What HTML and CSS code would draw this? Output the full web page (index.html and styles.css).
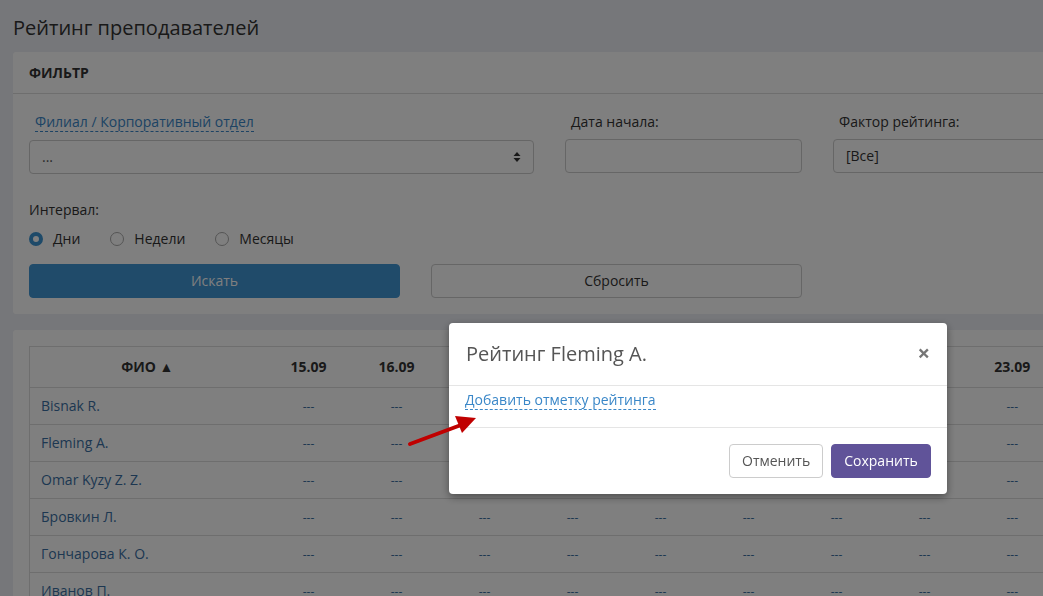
FILE: index.html
```html
<!DOCTYPE html>
<html lang="ru">

<head>
    <meta charset="UTF-8">
    <meta name="viewport" content="width=device-width, initial-scale=1.0">
    <title>Рейтинг преподавателей</title>
    <link rel="stylesheet" href="styles.css">
</head>

<body>
    <div class="page">
        <h1 class="page-title">Рейтинг преподавателей</h1>

        <div class="panel filter">
            <div class="panel-head">Фильтр</div>
            <div class="panel-body">
                <div class="filter-row">
                    <div class="field wide">
                        <label class="label link-label">Филиал / Корпоративный отдел</label>
                        <div class="control select">
                            <span>...</span>
                            <svg class="updown" width="8" height="12" viewBox="0 0 8 12">
                                <path d="M4 1 L7.5 5 H0.5 Z M4 11 L7.5 7 H0.5 Z" fill="#333" />
                            </svg>
                        </div>
                    </div>
                    <div class="field">
                        <label class="label">Дата начала:</label>
                        <div class="control"></div>
                    </div>
                    <div class="field">
                        <label class="label">Фактор рейтинга:</label>
                        <div class="control">[Все]</div>
                    </div>
                </div>

                <div class="interval">
                    <div class="interval-title">Интервал:</div>
                    <div class="radios">
                        <span class="radio checked">Дни</span>
                        <span class="radio">Недели</span>
                        <span class="radio">Месяцы</span>
                    </div>
                </div>

                <div class="actions">
                    <div class="btn btn-primary">Искать</div>
                    <div class="btn btn-default">Сбросить</div>
                </div>
            </div>
        </div>

        <div class="panel results">
            <table class="table">
                <thead>
                    <tr>
                        <th class="name-col">ФИО ▲</th>
                        <th>15.09</th>
                        <th>16.09</th>
                        <th>17.09</th>
                        <th>18.09</th>
                        <th>19.09</th>
                        <th>20.09</th>
                        <th>21.09</th>
                        <th>22.09</th>
                        <th>23.09</th>
                    </tr>
                </thead>
                <tbody class="list"></tbody>
            </table>
        </div>
    </div>

    <div class="overlay"></div>

    <div class="modal">
        <div class="modal-head">
            <div class="modal-title">Рейтинг Fleming A.</div>
            <span class="close">&times;</span>
        </div>
        <div class="modal-body">
            <span class="dash-link">Добавить отметку рейтинга</span>
        </div>
        <div class="modal-foot">
            <div class="btn btn-light">Отменить</div>
            <div class="btn btn-purple">Сохранить</div>
        </div>
    </div>

    <!-- стрелка-подсказка поверх окна -->
    <svg class="pointer" width="90" height="50" viewBox="0 0 90 50">
        <path d="M5 44 L56 25" stroke="#c00000" stroke-width="4" stroke-linecap="round" />
        <path d="M71 18 L50 16 L57 33 Z" fill="#c00000" />
    </svg>

    <script>
        const list = document.querySelector('.list')
        const names = ['Bisnak R.', 'Fleming A.', 'Omar Kyzy Z. Z.', 'Бровкин Л.', 'Гончарова К. О.', 'Иванов П.']

        names.forEach(name => {
            const tr = document.createElement('tr')
            let cells = `<td class="name-col"><span class="name">${name}</span></td>`
            for (let i = 0; i < 9; i++) {
                cells += '<td><span class="dash">---</span></td>'
            }
            tr.innerHTML = cells
            list.appendChild(tr)
        })
    </script>
</body>

</html>
```

FILE: styles.css
```css
*,
*::before {
    margin: 0;
    padding: 0;
    box-sizing: border-box;
}

body {
    background-color: #eceef4;
    font-family: "Open Sans", "Noto Sans", sans-serif;
    font-size: 14px;
    line-height: 20px;
    color: #333;
    overflow: hidden;
    height: 596px;
}

.page {
    width: 1073px;
    margin-left: 13px;
}

.page-title {
    font-size: 20px;
    font-weight: 400;
    line-height: 28px;
    padding-top: 14px;
    margin-bottom: 10px;
}

.panel {
    background-color: #fff;
    border-radius: 3px;
}

.panel-head {
    height: 42px;
    line-height: 42px;
    padding: 0 16px;
    font-size: 14px;
    font-weight: 700;
    text-transform: uppercase;
    border-bottom: 1px solid #ddd;
}

.panel-body {
    padding: 18px 16px 16px;
}

.filter-row {
    display: flex;
    gap: 31px;
}

.field {
    width: 237px;
}

.field.wide {
    width: 505px;
}

.label {
    display: inline-block;
    padding-left: 6px;
    margin-bottom: 7px;
}

.link-label {
    color: #3a87c8;
    line-height: 19px;
    margin-bottom: 8px;
    border-bottom: 1px dashed #3a87c8;
    margin-left: 6px;
    padding-left: 0;
}

.control {
    height: 34px;
    border: 1px solid #ccc;
    border-radius: 4px;
    padding: 6px 12px;
    display: flex;
    align-items: center;
}

.select {
    justify-content: space-between;
    padding-right: 12px;
    color: #555;
}

.interval {
    margin-top: 26px;
}

.radios {
    display: flex;
    gap: 30px;
    margin-top: 9px;
}

.radio {
    display: flex;
    align-items: center;
    gap: 10px;
}

.radio::before {
    content: "";
    flex: none;
    width: 14px;
    height: 14px;
    border-radius: 50%;
    border: 1px solid #aaa;
    background-color: #fff;
}

.radio.checked::before {
    border: 4.5px solid #3c94d2;
    background-color: #fff;
}

.actions {
    display: flex;
    gap: 31px;
    margin-top: 15px;
}

.actions .btn {
    width: 371px;
}

.btn {
    height: 34px;
    line-height: 32px;
    text-align: center;
    border-radius: 4px;
    border: 1px solid transparent;
    padding: 0 12px;
}

.btn-primary {
    background-color: #4096d4;
    border-color: #4096d4;
    color: #fff;
}

.btn-default {
    background-color: #fff;
    border-color: #ccc;
    color: #333;
}

.results {
    margin-top: 16px;
    padding: 16px 16px;
    height: 300px;
}

.table {
    border-collapse: collapse;
    table-layout: fixed;
    width: 1027px;
    border: 1px solid #ddd;
}

.table th,
.table td {
    width: 88px;
    text-align: center;
    border-top: 1px solid #ddd;
    white-space: nowrap;
}

.table th {
    height: 41px;
    font-weight: 700;
}

.table td {
    height: 37px;
}

.table .name-col {
    width: 235px;
}

.table td.name-col {
    text-align: left;
    padding-left: 11px;
}

.name {
    color: #3a6fa3;
}

.dash {
    color: #3a6fa3;
    font-size: 12px;
}

.overlay {
    position: fixed;
    inset: 0;
    background-color: rgba(0, 0, 0, 0.5);
}

.modal {
    position: fixed;
    left: 449px;
    top: 323px;
    width: 498px;
    background-color: #fff;
    border-radius: 4px;
    box-shadow: 0 3px 9px rgba(0, 0, 0, 0.4);
}

.modal-head {
    height: 63px;
    padding: 0 17px;
    display: flex;
    align-items: center;
    justify-content: space-between;
    border-bottom: 1px solid #e5e5e5;
}

.modal-title {
    font-size: 20px;
    color: #555;
}

.close {
    font-size: 22px;
    font-weight: 700;
    color: #555;
    opacity: 0.8;
    margin-top: -4px;
}

.modal-body {
    height: 42px;
    padding: 4px 16px 0;
    border-bottom: 1px solid #e5e5e5;
}

.dash-link {
    color: #3a87c8;
    border-bottom: 1px dashed #3a87c8;
}

.modal-foot {
    display: flex;
    justify-content: flex-end;
    gap: 8px;
    padding: 16px 16px 16px;
}

.btn-light {
    background-color: #fff;
    border-color: #ccc;
    color: #555;
    width: 94px;
}

.btn-purple {
    background-color: #605399;
    border-color: #605399;
    color: #fff;
    width: 100px;
}

.pointer {
    position: fixed;
    left: 405px;
    top: 400px;
}
```
